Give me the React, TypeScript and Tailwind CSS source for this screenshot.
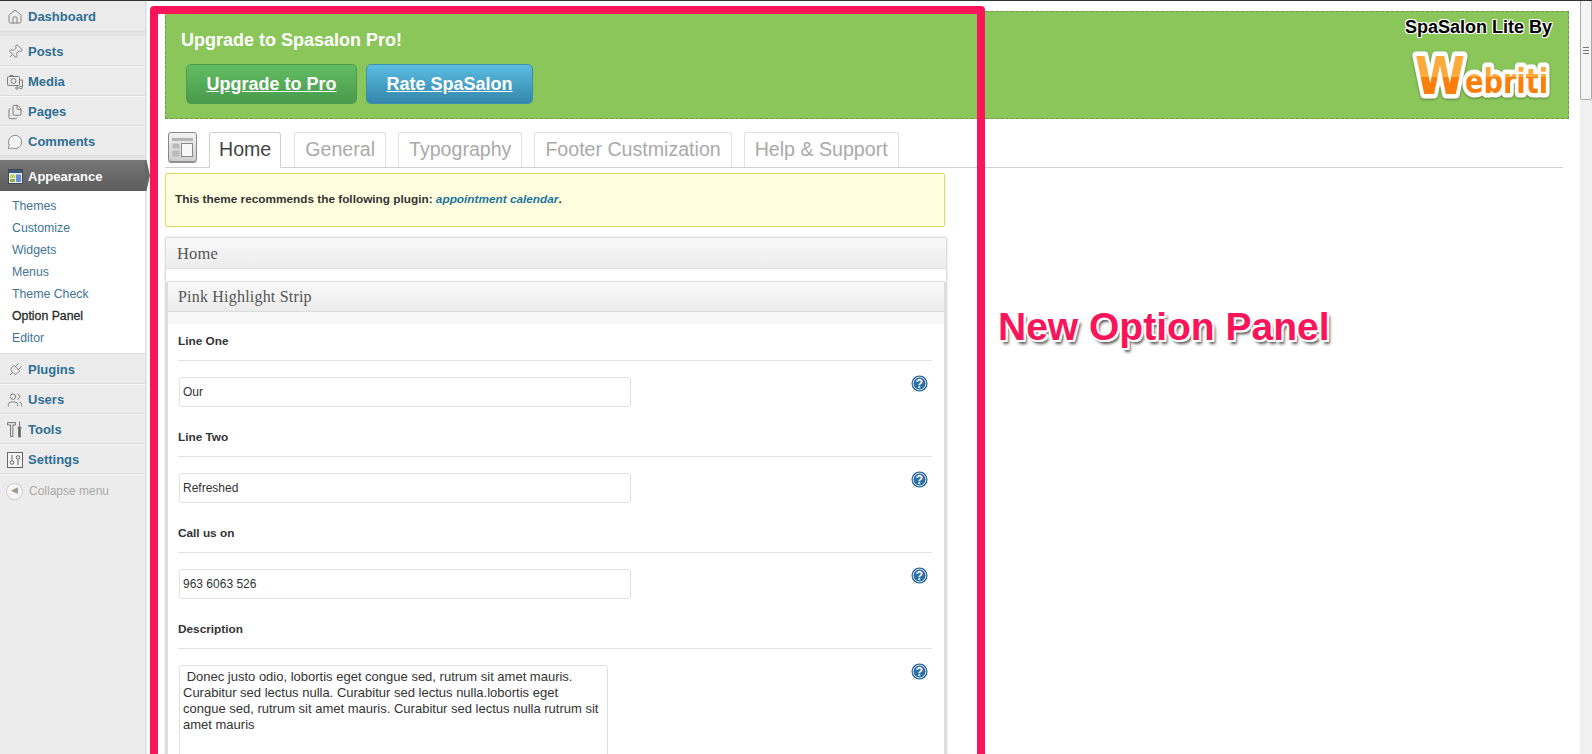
import { House, Pin, Files, MessageCircle, Plug, Users } from "lucide-react";
import type { ReactNode } from "react";

const gray = "#7d7d7d";

function MediaIcon() {
  return (
    <svg width="16" height="16" viewBox="0 0 16 16" fill="none" stroke={gray} strokeWidth="1">
      <rect x="0.5" y="2.5" width="12" height="9" rx="1" />
      <circle cx="6.5" cy="7" r="2.5" />
      <path d="M3 2.5V1.5H6V2.5M13 6H15.5V13" />
      <circle cx="10" cy="14" r="1.3" />
      <circle cx="14" cy="13.5" r="1.3" />
    </svg>
  );
}

function ToolsIcon() {
  return (
    <svg width="16" height="17" viewBox="0 0 16 17" fill="none" stroke={gray} strokeWidth="1">
      <path d="M0.5 1.5H8.5V4H6V15.5H3.5V4H0.5Z" fill="#ddd" />
      <path d="M12.5 0.5V6M11 6H14L13.5 9V16H11.5V9Z" fill="#666" />
    </svg>
  );
}

function SettingsIcon() {
  return (
    <svg width="16" height="16" viewBox="0 0 16 16" fill="none" stroke="#666" strokeWidth="1">
      <rect x="0.5" y="0.5" width="15" height="15" fill="#f4f4f4" />
      <path d="M5 3V8M11 8V13" />
      <circle cx="5" cy="10.5" r="1.8" />
      <circle cx="11" cy="5.5" r="1.8" />
    </svg>
  );
}

function AppearanceIcon() {
  return (
    <svg width="15" height="15" viewBox="0 0 15 15">
      <rect x="0.5" y="0.5" width="14" height="14" fill="#e8eef4" stroke="#3d4a55" />
      <rect x="1" y="1" width="13" height="3" fill="#3d5b78" />
      <rect x="2" y="5.5" width="5" height="3.5" fill="#c5d25a" />
      <rect x="2" y="10" width="5" height="3" fill="#8fb04a" />
      <rect x="8" y="5.5" width="5" height="7.5" fill="#6d8fd6" />
    </svg>
  );
}

function LayoutIcon() {
  return (
    <div className="ml-[3px] h-[30px] w-[29px] shrink-0 rounded-[3px] border border-[#888] bg-gradient-to-b from-[#f2f2f2] to-[#cfcfcf] px-[3px] pt-[5px] shadow-[0_1px_0_#999]">
      <svg width="21" height="20" viewBox="0 0 21 20" fill="#f7f7f7" stroke="#8a8a8a">
        <rect x="0" y="0" width="21" height="3" fill="#b5b5b5" stroke="none" />
        <rect x="0.5" y="5.5" width="7" height="5" fill="#b9b9b9" stroke="none" />
        <rect x="0.5" y="12.5" width="7" height="6" fill="#b9b9b9" stroke="none" />
        <rect x="9.5" y="5.5" width="11" height="13" />
      </svg>
    </div>
  );
}

function HelpIcon() {
  return (
    <svg width="17" height="17" viewBox="0 0 17 17" className="shrink-0">
      <circle cx="8.5" cy="8.5" r="8" fill="#1f5f93" />
      <circle cx="8.5" cy="8.5" r="6.4" fill="#2c6fa5" stroke="#dfeaf3" strokeWidth="1" />
      <text x="8.5" y="12.6" textAnchor="middle" fontSize="12" fontWeight="700" fill="#fff" fontFamily="Liberation Sans, sans-serif">
        ?
      </text>
    </svg>
  );
}

function WebritiLogo() {
  return (
    <svg width="146" height="60" viewBox="0 0 146 60" className="block overflow-visible drop-shadow-[0_1px_1px_rgba(0,0,0,0.35)]">
      <defs>
        <linearGradient id="wb" gradientUnits="userSpaceOnUse" x1="0" y1="0" x2="0" y2="60">
          <stop offset="0.55" stopColor="#fdaa3c" />
          <stop offset="0.55" stopColor="#fb7f0a" />
        </linearGradient>
      </defs>
      <text
        fill="url(#wb)"
        stroke="#fff"
        strokeWidth="9"
        strokeLinejoin="round"
        paintOrder="stroke"
        fontFamily="DejaVu Sans, sans-serif"
        fontWeight="700"
      >
        <tspan x="6" y="50" fontSize="52" textLength="50" lengthAdjust="spacingAndGlyphs">W</tspan>
        <tspan x="56" y="49" fontSize="33" textLength="83" lengthAdjust="spacingAndGlyphs">ebriti</tspan>
      </text>
    </svg>
  );
}

const topMenu: { name: string; icon: ReactNode }[] = [
  { name: "Posts", icon: <Pin size={16} color={gray} strokeWidth={1.4} className="rotate-45" /> },
  { name: "Media", icon: <MediaIcon /> },
  { name: "Pages", icon: <Files size={16} color={gray} strokeWidth={1.5} /> },
  { name: "Comments", icon: <MessageCircle size={16} color={gray} strokeWidth={1.3} fill="#f6f6f6" /> },
];

const bottomMenu: { name: string; icon: ReactNode }[] = [
  { name: "Plugins", icon: <Plug size={18} color={gray} strokeWidth={1.3} className="rotate-45" /> },
  { name: "Users", icon: <Users size={16} color={gray} strokeWidth={1.4} /> },
  { name: "Tools", icon: <ToolsIcon /> },
  { name: "Settings", icon: <SettingsIcon /> },
];

const subMenu = ["Themes", "Customize", "Widgets", "Menus", "Theme Check", "Option Panel", "Editor"];
const tabs = ["General", "Typography", "Footer Custmization", "Help & Support"];

const fields = [
  { label: "Line One", value: "Our" },
  { label: "Line Two", value: "Refreshed" },
  { label: "Call us on", value: "963 6063 526" },
];

function MenuRow({ name, icon, tall }: { name: string; icon: ReactNode; tall?: boolean }) {
  return (
    <a className={`flex items-center gap-[5px] border-b border-[#dcdcdc] pt-[2px] pl-[7px] text-[13px] font-bold text-[#2f6f94] shadow-[0_1px_0_#f8f8f8] ${tall ? "h-[31px]" : "h-[30px]"}`}>
      <span className="flex w-4 justify-center">{icon}</span>
      {name}
    </a>
  );
}

function Sidebar() {
  return (
    <aside className="relative w-[145px] shrink-0 bg-[#ececec]">
      <MenuRow name="Dashboard" icon={<House size={16} color={gray} strokeWidth={1.4} />} tall />
      <div className="h-[4px] bg-[#e4e4e4]" />
      {topMenu.map((m) => (
        <MenuRow key={m.name} name={m.name} icon={m.icon} />
      ))}
      <div className="h-[4px] bg-[#e4e4e4]" />
      <div className="relative flex h-[31px] items-center gap-[5px] bg-gradient-to-b from-[#777] to-[#5d5d5d] pt-[2px] pl-[7px] text-[13px] font-bold text-white">
        <span className="flex w-4 justify-center">
          <AppearanceIcon />
        </span>
        Appearance
        <span className="absolute top-0 left-full h-[31px] w-[5px] bg-[#666] [clip-path:polygon(0_0,30%_0,100%_50%,30%_100%,0_100%)]" />
      </div>
      <ul className="bg-white py-[4px] text-[12.3px] text-[#3f7595]">
        {subMenu.map((s) => (
          <li key={s} className={`flex h-[22px] items-center pl-[12px] ${s === "Option Panel" ? "text-[#2b2b2b] [-webkit-text-stroke:0.3px_#2b2b2b]" : ""}`}>
            {s}
          </li>
        ))}
      </ul>
      <div className="border-t border-[#dcdcdc]" />
      {bottomMenu.map((m) => (
        <MenuRow key={m.name} name={m.name} icon={m.icon} />
      ))}
      <div className="flex items-center gap-[6px] pt-[8px] pl-[6px] text-[12px] text-[#aaa]">
        <span className="flex h-[17px] w-[17px] items-center justify-center rounded-full border border-[#ccc] bg-[#f6f6f6] text-[9px] text-[#999]">
          ◀
        </span>
        Collapse menu
      </div>
    </aside>
  );
}

function Banner() {
  return (
    <section className="flex h-[108px] justify-between border border-dashed border-[#6b9a4f] bg-[#8bc65a]">
      <div className="pt-[17px] pl-[15px]">
        <h1 className="text-[18px] leading-[22px] font-bold text-white">Upgrade to Spasalon Pro!</h1>
        <div className="mt-[13px] ml-[5px] flex gap-[9px]">
          <a className="flex h-[40px] items-center rounded-[5px] border border-[#4f9a52] bg-gradient-to-b from-[#62bd62] to-[#4a9a4c] px-[19.5px] text-[18px] font-bold text-white underline">
            Upgrade to Pro
          </a>
          <a className="flex h-[40px] items-center rounded-[5px] border border-[#3d8fb0] bg-gradient-to-b from-[#5bbde0] to-[#3487ac] px-[19.5px] text-[18px] font-bold text-white underline">
            Rate SpaSalon
          </a>
        </div>
      </div>
      <div className="flex flex-col items-end pt-[5px] pr-[13px]">
        <div className="pr-[3px] text-[18px] leading-[20px] font-bold text-black [text-shadow:1px_1px_0_#fff,-1px_1px_0_#fff,1px_-1px_0_#fff,-1px_-1px_0_#fff]">
          SpaSalon Lite By
        </div>
        <div className="mt-[7px]">
          <WebritiLogo />
        </div>
      </div>
    </section>
  );
}

function Tabs() {
  return (
    <nav className="mt-[13px] mr-[6px] flex h-[36px] gap-[12px] border-b border-[#cfcfcf] text-[19.6px]">
      <LayoutIcon />
      <a className="-mb-px mr-[1px] flex h-[36px] items-center rounded-t-[3px] border border-b-white border-[#cfcfcf] bg-white px-[9px] text-[#444]">
        Home
      </a>
      {tabs.map((t) => (
        <a key={t} className="flex h-[35px] items-center rounded-t-[3px] border border-b-0 border-[#e0e0e0] px-[10px] text-[#aaa]">
          {t}
        </a>
      ))}
    </nav>
  );
}

function Field({ label, children }: { label: string; children: ReactNode }) {
  return (
    <div>
      <div className="flex h-[37px] items-center border-b border-[#e2e2e2] text-[11.8px] font-bold text-[#333]">
        {label}
      </div>
      <div className="mt-[16px] flex items-start justify-between pr-[4px] pl-[1px]">
        {children}
        <div className="-mt-[2px]">
          <HelpIcon />
        </div>
      </div>
    </div>
  );
}

function OptionsPanel() {
  return (
    <section className="mt-[10px] w-[782px] rounded-t-[3px] border border-b-0 border-[#dcdcdc] bg-white shadow-[0_0_2px_#ccc]">
      <h2 className="flex h-[31px] items-center border-b border-[#ddd] bg-gradient-to-b from-[#f9f9f9] to-[#ececec] pt-[2px] pl-[11px] font-['Liberation_Serif',serif] text-[16.5px] tracking-[0.2px] text-[#555]">
        Home
      </h2>
      <div className="mt-[12px] rounded-t-[3px] border-x-2 border-t border-[#dedede] bg-white">
        <h3 className="flex h-[30px] items-center border-b border-[#ddd] bg-gradient-to-b from-[#f9f9f9] to-[#ececec] pl-[10px] font-['Liberation_Serif',serif] text-[16px] tracking-[0.2px] text-[#555]">
          Pink Highlight Strip
        </h3>
        <div className="h-[12px] bg-[#f8f8f8]" />
        <div className="pr-[12px] pl-[10px]">
          {fields.map((f) => (
            <div key={f.label} className="h-[96px]">
              <Field label={f.label}>
                <input
                  readOnly
                  value={f.value}
                  className="h-[30px] w-[452px] rounded-[3px] border border-[#dfdfdf] bg-white px-[3px] text-[12px] text-[#333] outline-none"
                />
              </Field>
            </div>
          ))}
          <Field label="Description">
            <textarea
              readOnly
              defaultValue=" Donec justo odio, lobortis eget congue sed, rutrum sit amet mauris. Curabitur sed lectus nulla. Curabitur sed lectus nulla.lobortis eget congue sed, rutrum sit amet mauris. Curabitur sed lectus nulla rutrum sit amet mauris"
              className="h-[160px] w-[429px] resize-none rounded-[3px] border border-[#dfdfdf] bg-white px-[3px] py-[3px] text-[13px] leading-[16px] text-[#333] outline-none"
            />
          </Field>
        </div>
      </div>
    </section>
  );
}

export default function App() {
  return (
    <div className="relative flex h-[754px] overflow-hidden border-t border-[#333] bg-white font-['Liberation_Sans',Arial,sans-serif]">
      <Sidebar />
      <main className="min-w-0 flex-1 pt-[10px] pr-[11px] pl-[20px] shadow-[inset_3px_0_3px_-2px_#ccc]">
        <Banner />
        <Tabs />
        <div className="mt-[5px] flex h-[54px] w-[780px] items-center rounded-[2px] border border-[#e0d968] bg-[#ffffe0] pl-[9px] text-[11.8px] font-bold text-[#333]">
          This theme recommends the following plugin:&nbsp;
          <em className="text-[#21759b]">appointment calendar</em>.
        </div>
        <OptionsPanel />
      </main>
      <div className="-mt-px w-[12px] shrink-0 bg-[#f0f0f0]">
        <div className="flex h-[100px] flex-col justify-center gap-[2px] rounded-[2px] border border-[#aaa] bg-[#f4f4f4] px-[2px]">
          <span className="h-px bg-[#777]" />
          <span className="h-px bg-[#777]" />
          <span className="h-px bg-[#777]" />
        </div>
      </div>

      {/* annotation drawn on top of the screenshot */}
      <div className="pointer-events-none absolute top-[5px] left-[150px] h-[800px] w-[835px] rounded-[4px] border-[8px] border-[#fa1459]" />
      <div className="pointer-events-none absolute top-[301px] left-[998px] text-[39px] leading-[50px] font-bold whitespace-nowrap text-[#fa1459] [text-shadow:2px_0_0_#fff,-2px_0_0_#fff,0_-2px_0_#fff,0_2px_0_#fff,2px_2px_0_#fff,-2px_-2px_0_#fff,3px_4px_3px_#555]">
        New Option Panel
      </div>
    </div>
  );
}
